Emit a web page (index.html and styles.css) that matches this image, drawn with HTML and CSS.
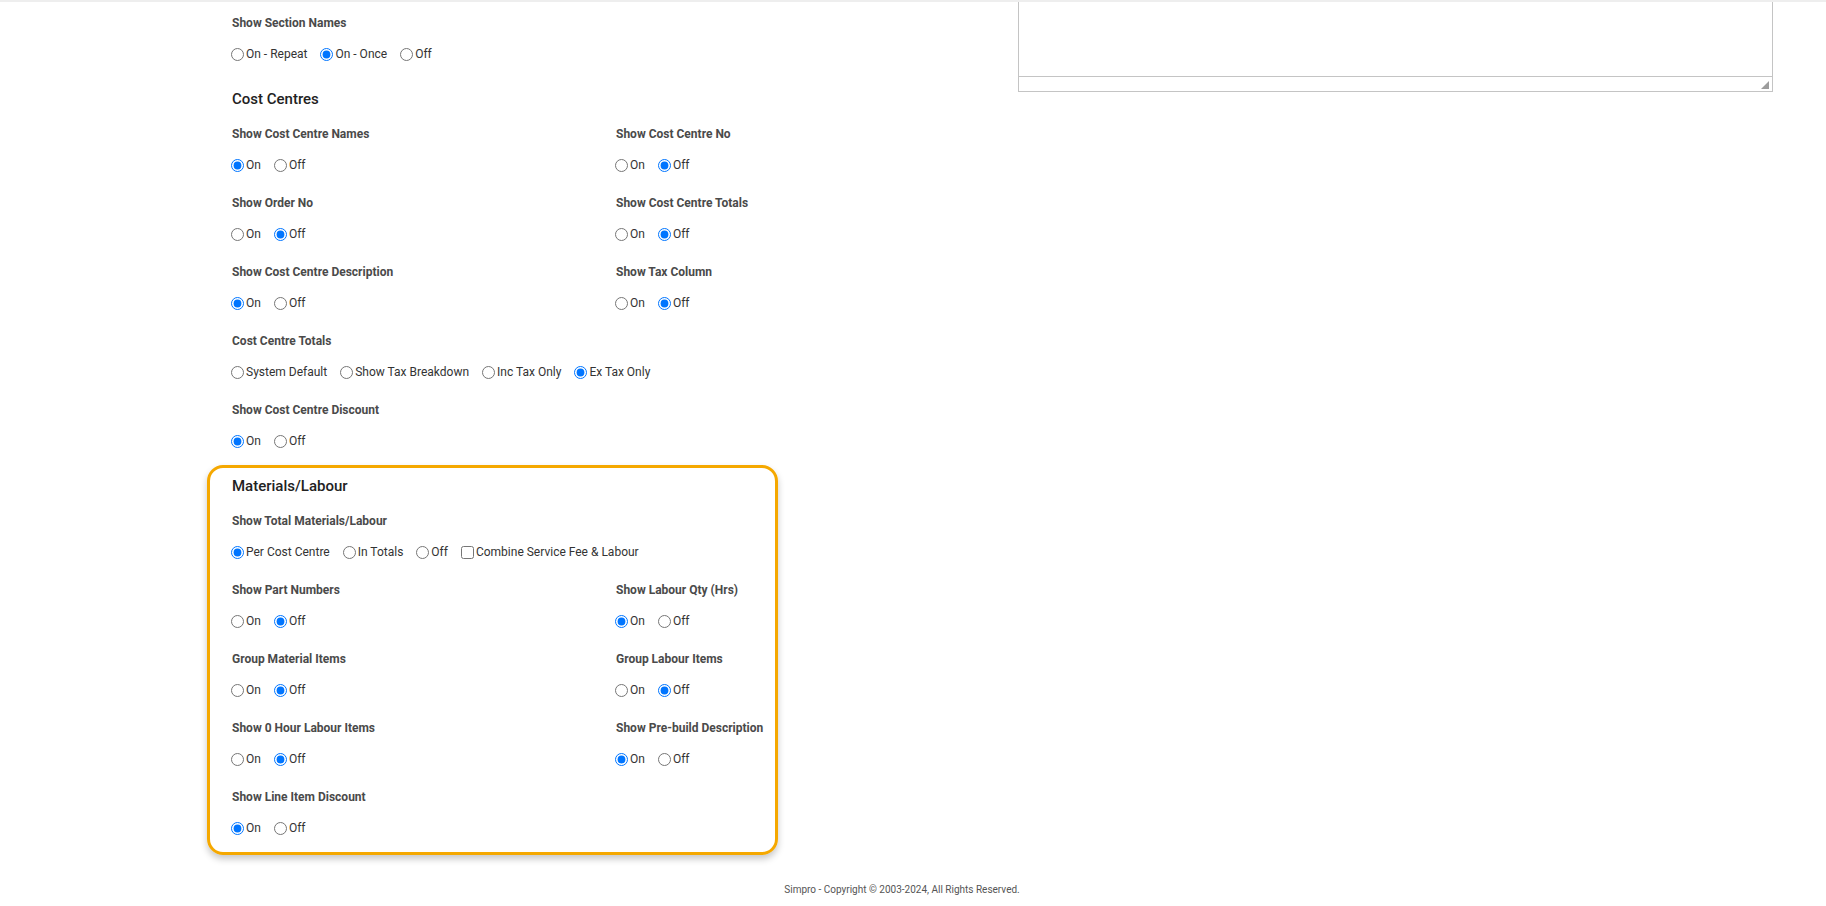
FILE: index.html
```html
<!DOCTYPE html>
<html lang="en">
<head>
    <meta charset="UTF-8">
    <title>Print Settings</title>
    <link rel="stylesheet" href="styles.css">
</head>
<body>
    <div class="top-rule"></div>
    <div class="page">
        <div class="form-col">
            <section class="section">
                <div class="field">
                    <div class="field-label">Show Section Names</div>
                    <div class="options">
                        <label class="opt"><input type="radio" name="secNames">On - Repeat</label>
                        <label class="opt"><input type="radio" name="secNames" checked>On - Once</label>
                        <label class="opt"><input type="radio" name="secNames">Off</label>
                    </div>
                </div>
            </section>

            <section class="section">
                <h2 class="section-title">Cost Centres</h2>
                <div class="grid">
                    <div class="field">
                        <div class="field-label">Show Cost Centre Names</div>
                        <div class="options">
                            <label class="opt"><input type="radio" name="ccNames" checked>On</label>
                            <label class="opt"><input type="radio" name="ccNames">Off</label>
                        </div>
                    </div>
                    <div class="field">
                        <div class="field-label">Show Cost Centre No</div>
                        <div class="options">
                            <label class="opt"><input type="radio" name="ccNo">On</label>
                            <label class="opt"><input type="radio" name="ccNo" checked>Off</label>
                        </div>
                    </div>
                    <div class="field">
                        <div class="field-label">Show Order No</div>
                        <div class="options">
                            <label class="opt"><input type="radio" name="orderNo">On</label>
                            <label class="opt"><input type="radio" name="orderNo" checked>Off</label>
                        </div>
                    </div>
                    <div class="field">
                        <div class="field-label">Show Cost Centre Totals</div>
                        <div class="options">
                            <label class="opt"><input type="radio" name="ccTotals">On</label>
                            <label class="opt"><input type="radio" name="ccTotals" checked>Off</label>
                        </div>
                    </div>
                    <div class="field">
                        <div class="field-label">Show Cost Centre Description</div>
                        <div class="options">
                            <label class="opt"><input type="radio" name="ccDesc" checked>On</label>
                            <label class="opt"><input type="radio" name="ccDesc">Off</label>
                        </div>
                    </div>
                    <div class="field">
                        <div class="field-label">Show Tax Column</div>
                        <div class="options">
                            <label class="opt"><input type="radio" name="taxCol">On</label>
                            <label class="opt"><input type="radio" name="taxCol" checked>Off</label>
                        </div>
                    </div>
                    <div class="field wide">
                        <div class="field-label">Cost Centre Totals</div>
                        <div class="options">
                            <label class="opt"><input type="radio" name="ccTotalMode">System Default</label>
                            <label class="opt"><input type="radio" name="ccTotalMode">Show Tax Breakdown</label>
                            <label class="opt"><input type="radio" name="ccTotalMode">Inc Tax Only</label>
                            <label class="opt"><input type="radio" name="ccTotalMode" checked>Ex Tax Only</label>
                        </div>
                    </div>
                    <div class="field wide">
                        <div class="field-label">Show Cost Centre Discount</div>
                        <div class="options">
                            <label class="opt"><input type="radio" name="ccDiscount" checked>On</label>
                            <label class="opt"><input type="radio" name="ccDiscount">Off</label>
                        </div>
                    </div>
                </div>
            </section>

            <section class="section highlight">
                <h2 class="section-title">Materials/Labour</h2>
                <div class="grid">
                    <div class="field wide">
                        <div class="field-label">Show Total Materials/Labour</div>
                        <div class="options">
                            <label class="opt"><input type="radio" name="totalML" checked>Per Cost Centre</label>
                            <label class="opt"><input type="radio" name="totalML">In Totals</label>
                            <label class="opt"><input type="radio" name="totalML">Off</label>
                            <label class="opt"><input type="checkbox" name="combineFee">Combine Service Fee &amp; Labour</label>
                        </div>
                    </div>
                    <div class="field">
                        <div class="field-label">Show Part Numbers</div>
                        <div class="options">
                            <label class="opt"><input type="radio" name="partNo">On</label>
                            <label class="opt"><input type="radio" name="partNo" checked>Off</label>
                        </div>
                    </div>
                    <div class="field">
                        <div class="field-label">Show Labour Qty (Hrs)</div>
                        <div class="options">
                            <label class="opt"><input type="radio" name="labourQty" checked>On</label>
                            <label class="opt"><input type="radio" name="labourQty">Off</label>
                        </div>
                    </div>
                    <div class="field">
                        <div class="field-label">Group Material Items</div>
                        <div class="options">
                            <label class="opt"><input type="radio" name="groupMat">On</label>
                            <label class="opt"><input type="radio" name="groupMat" checked>Off</label>
                        </div>
                    </div>
                    <div class="field">
                        <div class="field-label">Group Labour Items</div>
                        <div class="options">
                            <label class="opt"><input type="radio" name="groupLab">On</label>
                            <label class="opt"><input type="radio" name="groupLab" checked>Off</label>
                        </div>
                    </div>
                    <div class="field">
                        <div class="field-label">Show 0 Hour Labour Items</div>
                        <div class="options">
                            <label class="opt"><input type="radio" name="zeroHour">On</label>
                            <label class="opt"><input type="radio" name="zeroHour" checked>Off</label>
                        </div>
                    </div>
                    <div class="field">
                        <div class="field-label">Show Pre-build Description</div>
                        <div class="options">
                            <label class="opt"><input type="radio" name="prebuild" checked>On</label>
                            <label class="opt"><input type="radio" name="prebuild">Off</label>
                        </div>
                    </div>
                    <div class="field wide">
                        <div class="field-label">Show Line Item Discount</div>
                        <div class="options">
                            <label class="opt"><input type="radio" name="lineDiscount" checked>On</label>
                            <label class="opt"><input type="radio" name="lineDiscount">Off</label>
                        </div>
                    </div>
                </div>
            </section>
        </div>

        <div class="side-col">
            <div class="editor">
                <div class="editor-body"></div>
                <div class="editor-status"><span class="grip"></span></div>
            </div>
        </div>
    </div>

    <footer class="footer">Simpro - Copyright &copy; 2003-2024, All Rights Reserved.</footer>
</body>
</html>
```

FILE: styles.css
```css
* {
    box-sizing: border-box;
}

body {
    margin: 0;
    font-family: Roboto, 'Liberation Sans', sans-serif;
    color: #333;
    background: #fff;
}

.top-rule {
    height: 2px;
    background: #eeeeee;
}

.page {
    display: flex;
    align-items: flex-start;
}

.form-col {
    width: 571px;
    margin-left: 207px;
    padding-top: 13px;
}

.section {
    padding: 0 25px;
}

.section-title {
    margin: 27px 0 17px;
    font-size: 15px;
    line-height: 20px;
    font-weight: 500;
    color: #222;
}

.grid {
    display: grid;
    grid-template-columns: 384px 1fr;
}

.field {
    margin-bottom: 22px;
}

.field.wide {
    grid-column: 1 / -1;
}

.section:nth-child(2) .field:last-child {
    margin-bottom: 16px;
}

.field-label {
    font-size: 12px;
    line-height: 16px;
    font-weight: 700;
    color: #4a4a4a;
    margin-bottom: 15px;
    white-space: nowrap;
}

.options {
    display: flex;
    gap: 14px;
    font-size: 12px;
    line-height: 16px;
    color: #333;
    white-space: nowrap;
}

.opt {
    display: flex;
    align-items: center;
    cursor: pointer;
}

.opt input {
    width: 13px;
    height: 13px;
    margin: 0 2px 0 -1px;
}

.highlight {
    border: 3px solid #f5a800;
    border-radius: 16px;
    padding: 8px 22px 16px;
    box-shadow: 0 4px 7px rgba(0, 0, 0, 0.22);
}

.highlight .section-title {
    margin-top: 0;
}

.highlight .field:last-child {
    margin-bottom: 0;
}

.side-col {
    margin-left: 240px;
    width: 755px;
}

.editor {
    border: 1px solid #c4c4c4;
    border-top: none;
}

.editor-body {
    height: 74px;
}

.editor-status {
    height: 15px;
    border-top: 1px solid #c4c4c4;
    position: relative;
}

/* dotted resize grip */
.grip {
    position: absolute;
    right: 3px;
    bottom: 2px;
    width: 8px;
    height: 8px;
    background:
        radial-gradient(circle, #666 0.6px, transparent 0.9px) 0 0 / 2px 2px;
    clip-path: polygon(100% 0, 100% 100%, 0 100%);
}

.footer {
    margin-top: 28px;
    padding-right: 22px;
    text-align: center;
    font-size: 10px;
    line-height: 14px;
    color: #555;
}
```
